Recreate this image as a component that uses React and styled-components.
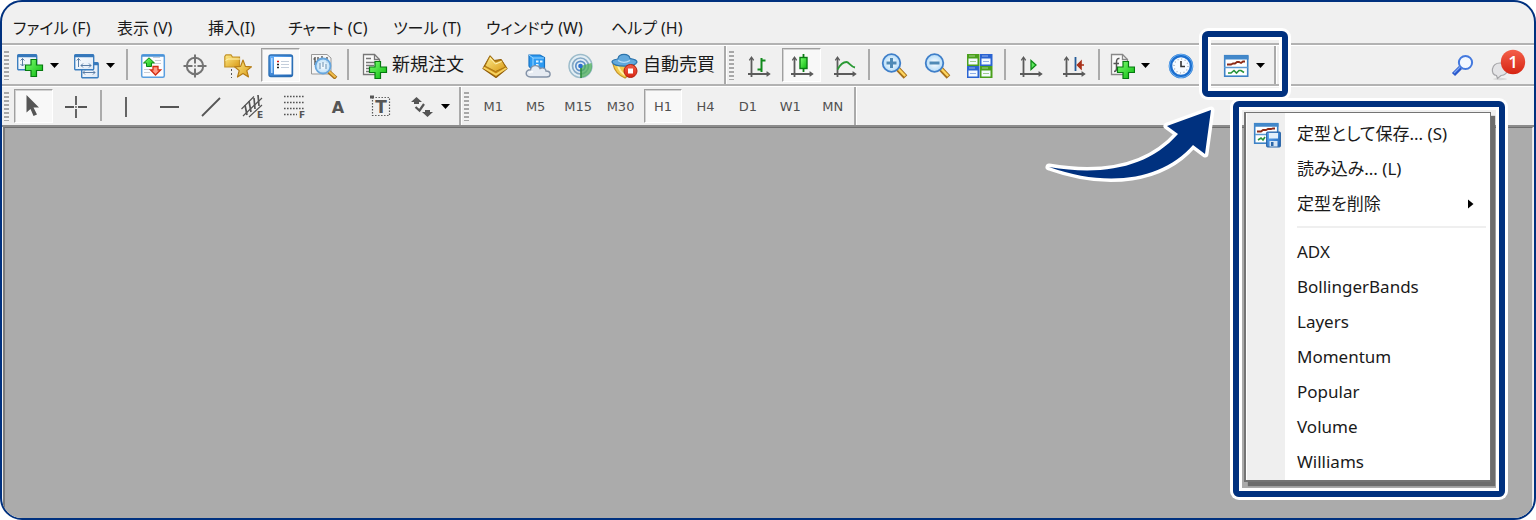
import { useState } from "react";
import styled, { createGlobalStyle, css } from "styled-components";

const NAVY = "#00317f";

const GlobalStyle = createGlobalStyle`
  * {
    box-sizing: border-box;
  }
  body {
    margin: 0;
    background: #fff;
    font-family: "Noto Sans", "Noto Sans CJK JP", sans-serif;
    font-size: 17px;
    line-height: 24px;
    color: #1a1a1a;
    font-feature-settings: "palt";
  }
  button {
    font: inherit;
    font-feature-settings: inherit;
    color: inherit;
    background: none;
    border: 0;
    padding: 0;
    margin: 0;
  }
  svg {
    display: block;
    flex: none;
  }
`;

/* ---------- layout ---------- */

const Frame = styled.div`
  min-height: 100vh;
  display: flex;
  flex-direction: column;
  border: 2px solid ${NAVY};
  border-radius: 22px;
  background: #f0f0f0;
  overflow: hidden;
`;

const MenuBar = styled.nav`
  height: 43px;
  padding: 10px 11px 0;
  display: grid;
  grid-template-columns: 104px 91px 80px 105px 93px 125px auto;
  justify-content: start;
  align-items: center;
  font-size: 16px;
  border-bottom: 2px solid #b2b2b2;
  box-shadow: 0 1px 0 #fff;
`;

const MenuBarItem = styled.button`
  justify-self: start;
  white-space: nowrap;
`;

const Toolbar = styled.div`
  display: flex;
  align-items: stretch;
  height: 41px;
  padding-top: 1px;
  border-bottom: 2px solid ${(p) => (p.$last ? "#8c8c8c" : "#b2b2b2")};
  box-shadow: ${(p) => (p.$last ? "none" : "0 1px 0 #fff")};
`;

const Grip = styled.span`
  width: 5px;
  margin: 5px 3px 4px 2px;
  background: repeating-linear-gradient(#a8a8a8 0 2px, #f4f4f4 2px 4px);
`;

const Separator = styled.span`
  width: 2px;
  margin: 3px ${(p) => (p.$wide ? 3 : 2)}px 4px;
  background: #ababab;
`;

const BandEnd = styled.span`
  width: 3px;
  background: #aaa;
  border-right: 1px solid #fff;
`;

const Group = styled.div`
  display: flex;
  width: ${(p) => p.$width}px;
`;

const pressed = css`
  background: #f8f8f8;
  border: 1px solid #fff;
  border-top-color: #a0a0a0;
  border-left-color: #a0a0a0;
  box-shadow: inset 1px 1px 0 #d2d2d2;
`;

const ToolButton = styled.button`
  flex: 1;
  min-width: 0;
  margin: 2px;
  display: flex;
  align-items: center;
  justify-content: center;
  border: 1px solid transparent;
  ${(p) => p["aria-pressed"] && pressed}
`;

const PeriodButton = styled(ToolButton)`
  padding-top: 2px;
  font-family: "DejaVu Sans", sans-serif;
  font-size: 13px;
  line-height: 16px;
  color: #505050;
`;

const DropButton = styled.button`
  width: 56px;
  display: flex;
  align-items: center;
  gap: 6px;
  padding-left: 4px;
`;

const LabelButton = styled.button`
  display: flex;
  align-items: center;
  gap: 4px;
  padding: 0 9px;
  font-size: 18px;
  white-space: nowrap;
  font-feature-settings: normal;

  span {
    padding-bottom: 2px;
  }
`;

const Tray = styled.div`
  display: flex;
  align-items: center;
  gap: 14px;
  margin-left: auto;
  padding-right: 7px;
`;

const Workspace = styled.main`
  flex: 1;
  margin: 0 1px;
  background: #ababab;
  border-left: 2px solid #7c7c7c;
  border-right: 1px solid #e8e8e8;
  border-top: 1px solid #6e6e6e;
`;

/* ---------- template control and its menu ---------- */

const TemplateControl = styled.div`
  position: relative;
  display: flex;
  margin-left: 16px;
  z-index: 2;
`;

const calloutBox = css`
  position: absolute;
  border: 6px solid ${NAVY};
  border-radius: 6px;
  box-shadow: 0 0 0 3px #fff, inset 0 0 0 3px #fff;
`;

const ButtonCallout = styled.span`
  ${calloutBox}
  top: -15px;
  left: -16px;
  width: 86px;
  height: 66px;
  pointer-events: none;
`;

const MenuCallout = styled.div`
  ${calloutBox}
  top: 55px;
  left: 15px;
  width: 272px;
  padding: 5px 8px 9px 5px;
`;

const Arrow = styled.svg`
  position: absolute;
  top: 54px;
  left: -178px;
`;

const Popup = styled.div`
  display: flex;
  flex-direction: column;
  padding: 3px 0 1px;
  border: 2px solid #747474;
  border-width: 1px 1px 2px 2px;
  background: linear-gradient(90deg, #fff 1px, #efefef 1px 39px, #fff 39px);
  box-shadow: 4px 4px 1px #6c6c6c;
`;

const PopupItem = styled.button`
  height: 35px;
  display: grid;
  grid-template-columns: 51px 1fr 22px;
  align-items: center;
  text-align: left;
  white-space: nowrap;

  svg:first-child {
    margin-left: 7px;
  }
`;

const PopupRule = styled.hr`
  width: auto;
  height: 2px;
  margin: 5px 4px 6px 51px;
  border: 0;
  background: #efefef;
`;

/* ---------- icons ---------- */

const Icon = ({ children }) => (
  <svg width="28" height="28" viewBox="0 0 28 28" fill="none" aria-hidden="true">
    {children}
  </svg>
);

const Caret = () => (
  <svg width="9" height="5" viewBox="0 0 9 5" aria-hidden="true">
    <path d="M0 0H9L4.5 5Z" fill="#000" />
  </svg>
);

const Gradients = () => (
  <svg width="0" height="0" style={{ position: "absolute" }} aria-hidden="true">
    <defs>
      <linearGradient id="green" x1="0" y1="0" x2="1" y2="1">
        <stop offset="0" stopColor="#7dff70" />
        <stop offset="1" stopColor="#0bb80f" />
      </linearGradient>
      <linearGradient id="gold" x1="0" y1="0" x2="1" y2="1">
        <stop offset="0" stopColor="#ffed8a" />
        <stop offset="1" stopColor="#d99a16" />
      </linearGradient>
      <linearGradient id="blue" x1="0" y1="0" x2="1" y2="1">
        <stop offset="0" stopColor="#69b4ff" />
        <stop offset="1" stopColor="#1b5fb0" />
      </linearGradient>
      <linearGradient id="paper" x1="0" y1="0" x2="1" y2="1">
        <stop offset="0" stopColor="#fff" />
        <stop offset="1" stopColor="#dde9f6" />
      </linearGradient>
      <linearGradient id="red" x1="0" y1="0" x2="0" y2="1">
        <stop offset="0" stopColor="#f4604a" />
        <stop offset="1" stopColor="#d62412" />
      </linearGradient>
      <radialGradient id="lens">
        <stop offset="0" stopColor="#fff" />
        <stop offset="1" stopColor="#b4dcf8" />
      </radialGradient>
    </defs>
  </svg>
);

const Plus = ({ x = 9, y = 8 }) => (
  <path
    transform={`translate(${x} ${y})`}
    d="M6 .5H11.5V6H17.5V11.5H11.5V17.5H6V11.5H.5V6H6Z"
    fill="url(#green)"
    stroke="#067a10"
    strokeWidth="1.2"
  />
);

const Pane = ({ x, y, w, h }) => (
  <g transform={`translate(${x} ${y})`}>
    <rect width={w} height={h} rx="1" fill="url(#paper)" stroke="#3c7fc0" strokeWidth="1.4" />
    <path d={`M0 1.2H${w}`} stroke="#3577ba" strokeWidth="2.6" />
  </g>
);

const NewChartIcon = () => (
  <Icon>
    <Pane x={1.7} y={3.7} w={19} h={15} />
    <path d="M6.5 7.5V15M4.5 9.5L6.5 7.5L8.5 9.5M4.5 13L6.5 15L8.5 13M11 15.5H15" stroke="#5a7da5" />
    <Plus />
  </Icon>
);

const ProfilesIcon = () => (
  <Icon>
    <Pane x={9.7} y={11.7} w={16.5} h={15} />
    <path d="M11 21.5H23M13 19.5L11 21.5L13 23.5M21 19.5L23 21.5L21 23.5" stroke="#5a7da5" />
    <Pane x={2.7} y={3.7} w={19} h={15} />
    <path d="M6.5 7.5V16M4.7 9.5L6.5 7.5L8.3 9.5M9 14.5H19M11 12.5L9 14.5L11 16.5M17 12.5L19 14.5L17 16.5" stroke="#5a7da5" />
  </Icon>
);

const MarketWatchIcon = () => (
  <Icon>
    <rect x="3.7" y="3.7" width="22.6" height="22.6" rx="1.5" fill="#fdfdff" stroke="#5a9fe0" strokeWidth="1.5" />
    <path d="M3.7 4.7H26.3" stroke="#4b92d6" strokeWidth="2" />
    <path d="M17 9.5H23M17 12.5H23M6 18.5H12M6 21.5H12M15 6.5H22" stroke="#c9ced6" />
    <path d="M11 6.8L16.5 12H13.5V15.5H8.5V12H5.5Z" fill="url(#green)" stroke="#0c8514" />
    <path d="M17.5 24L12.5 18.8H15V15.5H20V18.8H22.7Z" fill="#ff9a86" stroke="#d32c12" strokeWidth="1.3" />
  </Icon>
);

const CrosshairIcon = () => (
  <Icon>
    <circle cx="14" cy="15" r="8.2" stroke="#747474" strokeWidth="2" />
    <path d="M14 3.5V12.5M14 17.5V26.5M2.5 15H11.5M16.5 15H25.5" stroke="#747474" strokeWidth="2" />
    <circle cx="14" cy="15" r="1" fill="#747474" />
  </Icon>
);

const NavigatorIcon = () => (
  <Icon>
    <path d="M.8 16V5.5L2 3.8H7L8.5 6H15.5V16Z" fill="url(#gold)" stroke="#c2922a" strokeWidth="1.2" />
    <path d="M1.5 9.5L4 8H16" stroke="#fff3b5" />
    <path d="M7.5 18V27" stroke="#555" strokeDasharray="2 2" />
    <path d="M19 9L21.4 15.4L27.5 15.8L22.8 19.6L24.5 26L19 22.5L13.5 26L15.2 19.6L10.6 15.8L16.6 15.4Z" fill="url(#gold)" stroke="#b67d17" strokeWidth="1.2" strokeLinejoin="round" />
  </Icon>
);

const TerminalIcon = () => (
  <Icon>
    <rect x="2" y="4" width="23.5" height="21.5" rx="2" fill="url(#blue)" stroke="#2c6fb5" strokeWidth="1.4" />
    <rect x="7" y="6" width="17.5" height="17.5" fill="#fff" />
    <path d="M14 10.5H22M14 13.5H22M14 16.5H22" stroke="#c4cedb" />
    <path d="M4.8 7V22" stroke="#b9dcff" strokeWidth="1.5" />
    <path d="M10 10.5H12" stroke="#d11" strokeWidth="1.6" />
    <path d="M10 13.5H12M10 16.5H12" stroke="#222" strokeWidth="1.6" />
  </Icon>
);

const TesterIcon = () => (
  <Icon>
    <path d="M1.5 3.5H17L21 7V23H1.5Z" fill="#f6f6f6" stroke="#999" />
    <path d="M5 6V14M3.5 8H5M8 6V10M12 5V9M17 6V12M5 11H7M15 8H17" stroke="#555" strokeWidth="1.4" />
    <path d="M18.5 20.5L26 27.2" stroke="#a7701a" strokeWidth="4" />
    <path d="M18.5 20L25.5 26.3" stroke="#f0bd4b" strokeWidth="2" />
    <circle cx="13" cy="15" r="7.5" fill="url(#lens)" fillOpacity=".9" stroke="#67a6dd" strokeWidth="1.8" />
    <path d="M10 12V18M13 11V16M16 13V18" stroke="#86a6c2" strokeWidth="1.3" />
  </Icon>
);

const NewOrderIcon = () => (
  <Icon>
    <path d="M3.5 3.5H14.5L19.5 8.5V23.5H3.5Z" fill="#fafafa" stroke="#777" strokeWidth="1.3" />
    <path d="M14.5 3.5V8.5H19.5" stroke="#777" strokeWidth="1.3" />
    <path d="M6 7.5H11M6 11.5H17M6 14.5H14M6 17.5H9M6 20.5H9" stroke="#777" strokeWidth="1.5" />
    <Plus x={9} y={10} />
  </Icon>
);

const LedgerIcon = () => (
  <Icon>
    <path d="M2 17.5L9 5L13 9.5L20 8.5L26 17.5L15 26.5Z" fill="#c98a14" stroke="#8f5c0a" strokeWidth="1.2" strokeLinejoin="round" />
    <path d="M2.5 16.5L15 23.5L25.5 17" stroke="#f6d260" strokeWidth="2" />
    <path d="M9 5L14.5 11L20.5 9L24.5 16L14.5 20.5L4 15Z" fill="url(#gold)" stroke="#a06c0e" strokeWidth=".8" />
    <path d="M9 7L14.500 13L20.500 10.500" stroke="#fff4b8" />
  </Icon>
);

const CloudIcon = () => (
  <Icon>
    <path d="M5 4H16L20.5 6.500V19H8L5 15Z" fill="#2e9bf2" stroke="#1673c4" strokeWidth="1.2" />
    <path d="M5 4L9 7V18M9 7H20" stroke="#9ad6ff" />
    <path d="M12 10.500H14.500M12 14H14.500M16 10.500H18.500" stroke="#e2f4ff" strokeWidth="2" />
    <path d="M6.5 26C.5 26 1 18.5 6.5 18.8C7.5 13.5 14.5 13.5 16 17.5C19.5 15.8 22 18 22 20C27.8 20.3 27 26 22.5 26Z" fill="#e6ebf2" stroke="#8493a8" strokeWidth="1.4" />
    <path d="M5 22C7 20 9 21 9 21" stroke="#fff" strokeWidth="1.5" />
  </Icon>
);

const SignalIcon = () => (
  <Icon>
    <circle cx="13.5" cy="15" r="11.5" fill="#e3eef4" stroke="#9dbccb" strokeWidth="1.5" />
    <circle cx="13.5" cy="15" r="8" stroke="#87aac6" strokeWidth="1.7" />
    <circle cx="13.5" cy="15" r="4.7" stroke="#5d8fc8" strokeWidth="1.7" />
    <path d="M13.5 15L24.5 12C27 19 21 26.5 14 26.5Z" fill="#4faf59" fillOpacity=".75" />
    <path d="M14 15V27" stroke="#2d8c3c" strokeWidth="1.6" />
    <circle cx="13.5" cy="15" r="2.3" fill="#2b6fd0" />
  </Icon>
);

const AutoTradeIcon = () => (
  <Icon>
    <path d="M2 13L22 13L25 18L14 27Q4 23 2 13Z" fill="#f3cc4c" stroke="#c6932a" strokeWidth="1.2" />
    <path d="M7 15Q9 21 14 24" stroke="#fff0a6" strokeWidth="2" />
    <path d="M1 11C1 8 6 9 7 7.5C8 2 18 2 19 7.5C22 8 26 8.5 26 11C24 16.5 3 16.5 1 11Z" fill="#62a9dd" stroke="#2c74ac" strokeWidth="1.2" />
    <path d="M7 9.5C11 12 15 12 19 9.5" stroke="#b8def7" strokeWidth="1.4" />
    <circle cx="19.5" cy="20" r="6.5" fill="url(#red)" stroke="#b2200e" />
    <rect x="17" y="17.5" width="5" height="5" fill="#fff" />
  </Icon>
);

const Axes = () => (
  <g stroke="#5b5b5b" strokeWidth="1.8">
    <path d="M6.5 26V7M3 23H24" />
    <path d="M4.3 9.3L6.5 6.2L8.7 9.3M21.5 20.8L24.6 23L21.5 25.2" strokeWidth="1.3" />
  </g>
);

const BarsIcon = () => (
  <Icon>
    <Axes />
    <path d="M16.5 7V21M16.5 9.5H20.5M12.5 18.5H16.5" stroke="#118a1c" strokeWidth="2" />
  </Icon>
);

const CandlesIcon = () => (
  <Icon>
    <Axes />
    <path d="M15.5 3V21" stroke="#0c7c14" strokeWidth="1.8" />
    <rect x="12" y="6.5" width="7" height="11" fill="url(#green)" stroke="#0c7c14" strokeWidth="1.4" />
  </Icon>
);

const LineIcon = () => (
  <Icon>
    <Axes />
    <path d="M6.5 18.5C10 12 13 11 15.5 11C18 11 19.5 15.5 24 16.5" stroke="#2a9a35" strokeWidth="1.8" />
  </Icon>
);

const ZoomIcon = ({ plus }) => (
  <Icon>
    <path d="M17.5 17.5L25.5 26" stroke="#a7701a" strokeWidth="5" />
    <path d="M18 17.5L25.2 25" stroke="#ffd65e" strokeWidth="2.4" />
    <circle cx="11.5" cy="12" r="8.8" fill="url(#lens)" stroke="#3f7fc9" strokeWidth="1.8" />
    <path d={plus ? "M6.5 12H16.5M11.5 7V17" : "M6.5 12H16.5"} stroke="#4f8ab6" strokeWidth="3" />
  </Icon>
);

const tiles = [
  [1, 3, "#4aa01c"],
  [14, 3, "#2b64d2"],
  [1, 15, "#2b64d2"],
  [14, 15, "#4aa01c"],
];

const TileIcon = () => (
  <Icon>
    {tiles.map(([x, y, color]) => (
      <g key={`${x}-${y}`} transform={`translate(${x} ${y})`}>
        <rect width="12.500" height="12" fill={color} />
        <path d="M2 2H8" stroke="#fff" strokeOpacity=".5" />
        <rect x="1.5" y="4.5" width="9" height="6" fill="#f4faff" />
        <path d="M3 7.5H9" stroke={color} strokeOpacity=".5" />
      </g>
    ))}
  </Icon>
);

const AutoScrollIcon = () => (
  <Icon>
    <Axes />
    <path d="M14 9.5L19 14L14 18.5Z" fill="#5be85a" stroke="#108a1a" strokeWidth="1.3" />
  </Icon>
);

const ShiftIcon = () => (
  <Icon>
    <Axes />
    <path d="M15.5 6V20" stroke="#245b98" strokeWidth="1.8" />
    <path d="M24 14H19M21 10.5L17.5 14L21 17.5Z" fill="#c8432c" stroke="#a83018" strokeWidth="1.6" />
  </Icon>
);

const IndicatorsIcon = () => (
  <Icon>
    <path d="M4.5 3.5H15.500L20.500 8.5V23.5H4.5Z" fill="#fafafa" stroke="#888" strokeWidth="1.3" />
    <path d="M15.500 3.5V8.5H20.500" stroke="#888" strokeWidth="1.3" />
    <path d="M12.500 7.5Q9.500 7 9.500 11V17.5Q9.500 20.5 7 20.5M6.500 12.5H12" stroke="#555" strokeWidth="1.5" />
    <Plus x={10} y={10} />
  </Icon>
);

const ClockIcon = () => (
  <Icon>
    <circle cx="14" cy="15" r="10.5" fill="#f7fbff" stroke="#1c6fcf" strokeWidth="3.6" />
    <circle cx="14" cy="15" r="11.6" stroke="#6eb2f2" strokeWidth="1" />
    <circle cx="14" cy="15" r="7" stroke="#9aa5b0" strokeWidth="1.2" strokeDasharray="1 2.66" />
    <path d="M14 10V15.5H18" stroke="#333" strokeWidth="1.6" />
  </Icon>
);

const TemplateIcon = () => (
  <Icon>
    <rect x="2.7" y="4.7" width="23" height="20.5" fill="#fff" stroke="#3d82c6" strokeWidth="1.6" />
    <path d="M2 6.5H26.5" stroke="#4288ca" strokeWidth="4" />
    <path d="M2 16.5H26" stroke="#5d9bd5" strokeWidth="1.5" />
    <path d="M5 13.500H9L11 12.500H13L15 11H17L19 12L21 10.500H23" stroke="#8c2a16" strokeWidth="1.8" />
    <path d="M6 22H9L12 19.500L14.5 22L17 19.5H19L22 21.500" stroke="#28933b" strokeWidth="1.6" />
  </Icon>
);

const SaveTemplateIcon = () => (
  <Icon>
    <rect x="1.7" y="3.7" width="23" height="19.5" fill="#fff" stroke="#3d82c6" strokeWidth="1.6" />
    <path d="M1 5H25.5" stroke="#4288ca" strokeWidth="3.5" />
    <path d="M2 14.5H14" stroke="#5d9bd5" strokeWidth="1.5" />
    <path d="M4 11.5H8L10 10H13L15 9H18L20 8.5H22" stroke="#8c2a16" strokeWidth="1.8" />
    <path d="M5 20L8 18L10 20L12 17" stroke="#28933b" strokeWidth="1.6" />
    <rect x="13.7" y="12.2" width="13.6" height="14.6" rx="1" fill="url(#blue)" stroke="#2a66a8" strokeWidth="1.3" />
    <rect x="16" y="13" width="9" height="5.5" fill="#e4f0fb" />
    <rect x="16.5" y="21" width="8" height="5.5" fill="#d7e5f3" />
    <rect x="18" y="22" width="2.5" height="4" fill="#2a66a8" />
  </Icon>
);

const SearchIcon = () => (
  <Icon>
    <path d="M11.5 16.5L4.5 23.5" stroke="#2a59cc" strokeWidth="4.5" />
    <path d="M11 16L5 22" stroke="#7fa8f5" strokeWidth="1.2" />
    <circle cx="16.5" cy="11.5" r="6.6" fill="#f3f8ff" stroke="#4479de" strokeWidth="2" />
  </Icon>
);

const ChatIcon = () => (
  <svg width="36" height="32" viewBox="0 0 36 32" aria-hidden="true">
    <ellipse cx="9" cy="30" rx="7" ry="1.2" fill="#d8d8d8" />
    <path d="M9 14C0 14 -1 26 5.5 26.5L6.5 29.5L10 26.5C18 26.5 20 14 9 14Z" fill="#e4e4e6" stroke="#a5a5a8" strokeWidth="1.2" />
    <circle cx="22" cy="13" r="12.2" fill="url(#red)" />
    <text x="22" y="19" textAnchor="middle" fill="#fff" fontFamily="Open Sans, sans-serif" fontSize="17" fontWeight="600">
      1
    </text>
  </svg>
);

const ink = "#555";

const CursorIcon = () => (
  <Icon>
    <path d="M6.5 3V20.500L10.5 17L13.5 24L17 22.5L13.5 15.500H19Z" fill={ink} />
  </Icon>
);

const CrossIcon = () => (
  <Icon>
    <path d="M13 4V13M13 17V26M2 15H11M15 15H24" stroke={ink} strokeWidth="1.8" />
    <circle cx="13" cy="15" r=".9" fill={ink} />
  </Icon>
);

const VLineIcon = () => (
  <Icon>
    <path d="M15 5V25" stroke={ink} strokeWidth="1.8" />
  </Icon>
);

const HLineIcon = () => (
  <Icon>
    <path d="M6 15H25" stroke={ink} strokeWidth="1.8" />
  </Icon>
);

const TrendIcon = () => (
  <Icon>
    <path d="M5 24L23 6" stroke={ink} strokeWidth="1.8" />
  </Icon>
);

const smallLetter = { fill: ink, fontFamily: "DejaVu Sans, sans-serif", fontWeight: "bold" };

const ChannelIcon = () => (
  <Icon>
    <path d="M1.5 17L14 4.5M3 24L22 6M9 25L22 13" stroke={ink} strokeWidth="1.2" />
    <path d="M5 13L7 23M9 9L11 20M14 6L15 17M18 3L19 14" stroke={ink} strokeWidth="1.7" />
    <text x="17" y="26" fontSize="9" {...smallLetter}>
      E
    </text>
  </Icon>
);

const FiboIcon = () => (
  <Icon>
    <path d="M2 4.5H23M2 10.5H23M2 16.5H23M2 22.5H15" stroke={ink} strokeWidth="1.6" strokeDasharray="1.6 1.4" />
    <text x="17" y="26" fontSize="9" {...smallLetter}>
      F
    </text>
  </Icon>
);

const TextIcon = () => (
  <Icon>
    <text x="13" y="21" textAnchor="middle" fontSize="16" {...smallLetter}>
      A
    </text>
  </Icon>
);

const LabelIcon = () => (
  <Icon>
    <rect x="4.5" y="5.5" width="17" height="18" stroke={ink} strokeWidth="1.2" strokeDasharray="1.4 1.6" />
    <rect x="2" y="3.5" width="4" height="3" fill={ink} />
    <text x="13" y="21" textAnchor="middle" fontSize="17" {...smallLetter}>
      T
    </text>
  </Icon>
);

const ArrowsIcon = () => (
  <Icon>
    <path d="M9.5 5L15 10H12V12H7V10H4Z" fill={ink} />
    <path d="M20.5 25L15 20H18V18H23V20H26Z" fill={ink} />
    <path d="M8.5 15L12.5 18.500L17 12" stroke={ink} strokeWidth="2.2" />
  </Icon>
);

/* ---------- data ---------- */

const menus = ["ファイル (F)", "表示 (V)", "挿入(I)", "チャート (C)", "ツール (T)", "ウィンドウ (W)", "ヘルプ (H)"];
const periods = ["M1", "M5", "M15", "M30", "H1", "H4", "D1", "W1", "MN"];
const templates = ["ADX", "BollingerBands", "Layers", "Momentum", "Popular", "Volume", "Williams"];

const drawTools = [
  ["Vertical line", VLineIcon],
  ["Horizontal line", HLineIcon],
  ["Trendline", TrendIcon],
  ["Equidistant channel", ChannelIcon],
  ["Fibonacci retracement", FiboIcon],
  ["Text", TextIcon],
  ["Text label", LabelIcon],
];

function TemplateMenu() {
  return (
    <MenuCallout>
      <Popup role="menu">
        <PopupItem role="menuitem">
          <SaveTemplateIcon />
          <span>定型として保存... (S)</span>
        </PopupItem>
        <PopupItem role="menuitem">
          <span />
          <span>読み込み... (L)</span>
        </PopupItem>
        <PopupItem role="menuitem" aria-haspopup="menu">
          <span />
          <span>定型を削除</span>
          <svg width="6" height="10" viewBox="0 0 6 10" aria-hidden="true">
            <path d="M0 .5L5.5 5L0 9.5Z" fill="#000" />
          </svg>
        </PopupItem>
        <PopupRule />
        {templates.map((name) => (
          <PopupItem key={name} role="menuitem">
            <span />
            <span>{name}</span>
          </PopupItem>
        ))}
      </Popup>
    </MenuCallout>
  );
}

export default function App() {
  const [period, setPeriod] = useState("H1");
  const [chart, setChart] = useState("candles");
  const [open, setOpen] = useState(true);

  return (
    <Frame>
      <GlobalStyle />
      <Gradients />
      <MenuBar>
        {menus.map((label) => (
          <MenuBarItem key={label}>{label}</MenuBarItem>
        ))}
      </MenuBar>

      <Toolbar role="toolbar">
        <Grip />
        <DropButton aria-label="New chart">
          <NewChartIcon />
          <Caret />
        </DropButton>
        <DropButton aria-label="Profiles">
          <ProfilesIcon />
          <Caret />
        </DropButton>
        <Separator />
        <Group $width={215}>
          <ToolButton aria-label="Market watch"><MarketWatchIcon /></ToolButton>
          <ToolButton aria-label="Data window"><CrosshairIcon /></ToolButton>
          <ToolButton aria-label="Navigator"><NavigatorIcon /></ToolButton>
          <ToolButton aria-label="Terminal" aria-pressed={true}><TerminalIcon /></ToolButton>
          <ToolButton aria-label="Strategy tester"><TesterIcon /></ToolButton>
        </Group>
        <Separator />
        <LabelButton>
          <NewOrderIcon />
          <span>新規注文</span>
        </LabelButton>
        <Group $width={129}>
          <ToolButton aria-label="MetaEditor"><LedgerIcon /></ToolButton>
          <ToolButton aria-label="Cloud"><CloudIcon /></ToolButton>
          <ToolButton aria-label="Signals"><SignalIcon /></ToolButton>
        </Group>
        <LabelButton>
          <AutoTradeIcon />
          <span>自動売買</span>
        </LabelButton>
        <BandEnd />
        <Grip />
        <Group $width={129}>
          <ToolButton aria-label="Bar chart" aria-pressed={chart === "bars"} onClick={() => setChart("bars")}>
            <BarsIcon />
          </ToolButton>
          <ToolButton aria-label="Candlesticks" aria-pressed={chart === "candles"} onClick={() => setChart("candles")}>
            <CandlesIcon />
          </ToolButton>
          <ToolButton aria-label="Line chart" aria-pressed={chart === "line"} onClick={() => setChart("line")}>
            <LineIcon />
          </ToolButton>
        </Group>
        <Separator />
        <Group $width={129}>
          <ToolButton aria-label="Zoom in"><ZoomIcon plus /></ToolButton>
          <ToolButton aria-label="Zoom out"><ZoomIcon /></ToolButton>
          <ToolButton aria-label="Tile windows"><TileIcon /></ToolButton>
        </Group>
        <Separator $wide />
        <Group $width={86}>
          <ToolButton aria-label="Auto scroll"><AutoScrollIcon /></ToolButton>
          <ToolButton aria-label="Chart shift"><ShiftIcon /></ToolButton>
        </Group>
        <Separator $wide />
        <DropButton aria-label="Indicators">
          <IndicatorsIcon />
          <Caret />
        </DropButton>
        <Group $width={43}>
          <ToolButton aria-label="Periods"><ClockIcon /></ToolButton>
        </Group>
        <TemplateControl>
          <DropButton aria-label="Templates" aria-haspopup="menu" aria-expanded={open} onClick={() => setOpen(!open)}>
            <TemplateIcon />
            <Caret />
          </DropButton>
          <BandEnd />
          <ButtonCallout />
          <Arrow width="180" height="90" viewBox="0 0 180 90" aria-hidden="true">
            <path
              d="M9 67C62 76 108 68 138 34L127 26L171 10L165 54L153 45C123 80 68 88 9 67Z"
              fill={NAVY}
              stroke="#fff"
              strokeWidth="7"
              strokeLinejoin="round"
              paintOrder="stroke"
            />
          </Arrow>
          {open && <TemplateMenu />}
        </TemplateControl>
        <Tray>
          <button aria-label="Search"><SearchIcon /></button>
          <button aria-label="Notifications"><ChatIcon /></button>
        </Tray>
      </Toolbar>

      <Toolbar role="toolbar" $last>
        <Grip />
        <Group $width={86}>
          <ToolButton aria-label="Cursor" aria-pressed={true}><CursorIcon /></ToolButton>
          <ToolButton aria-label="Crosshair"><CrossIcon /></ToolButton>
        </Group>
        <Separator />
        <Group $width={299}>
          {drawTools.map(([label, ToolIcon]) => (
            <ToolButton key={label} aria-label={label}>
              <ToolIcon />
            </ToolButton>
          ))}
        </Group>
        <DropButton aria-label="Arrows">
          <ArrowsIcon />
          <Caret />
        </DropButton>
        <BandEnd />
        <Grip />
        <Group $width={382}>
          {periods.map((p) => (
            <PeriodButton key={p} aria-pressed={p === period} onClick={() => setPeriod(p)}>
              {p}
            </PeriodButton>
          ))}
        </Group>
        <BandEnd />
      </Toolbar>

      <Workspace />
    </Frame>
  );
}
